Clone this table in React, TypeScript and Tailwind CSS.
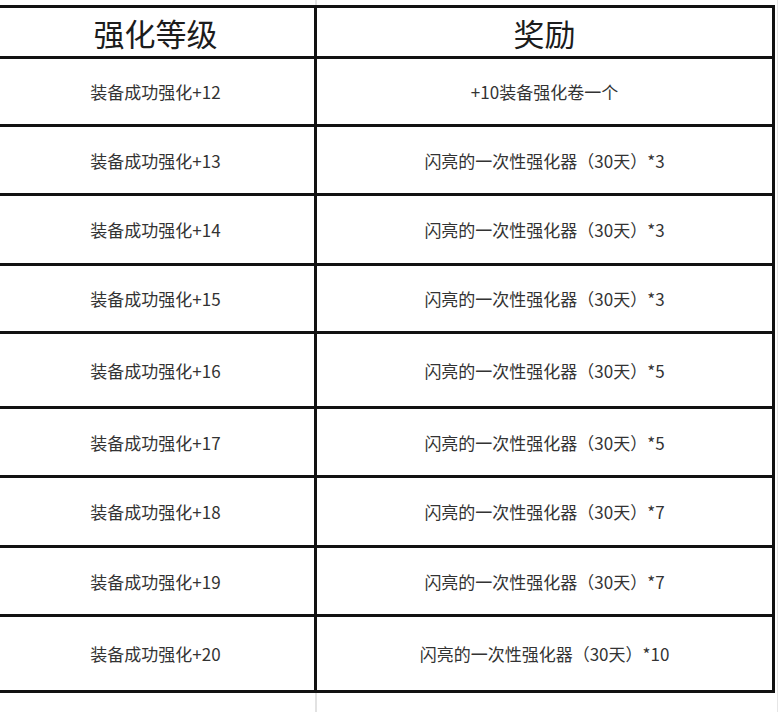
const rows: { level: string; reward: string; h: string }[] = [
  { level: "装备成功强化+12", reward: "+10装备强化卷一个", h: "h-[68px]" },
  { level: "装备成功强化+13", reward: "闪亮的一次性强化器（30天）*3", h: "h-[69px]" },
  { level: "装备成功强化+14", reward: "闪亮的一次性强化器（30天）*3", h: "h-[70px]" },
  { level: "装备成功强化+15", reward: "闪亮的一次性强化器（30天）*3", h: "h-[68px]" },
  { level: "装备成功强化+16", reward: "闪亮的一次性强化器（30天）*5", h: "h-[75px]" },
  { level: "装备成功强化+17", reward: "闪亮的一次性强化器（30天）*5", h: "h-[69px]" },
  { level: "装备成功强化+18", reward: "闪亮的一次性强化器（30天）*7", h: "h-[70px]" },
  { level: "装备成功强化+19", reward: "闪亮的一次性强化器（30天）*7", h: "h-[69px]" },
  { level: "装备成功强化+20", reward: "闪亮的一次性强化器（30天）*10", h: "h-[73px]" },
];

const font = { fontFamily: '"Noto Sans CJK SC", "Noto Sans", sans-serif' };

export default function App() {
  return (
    <div className="h-[712px] w-[780px] overflow-hidden bg-white" style={font}>
      <div className="w-[778px] border-r border-[#e6e6e6]">
        {/* faint ghost of the column divider above the table */}
        <div className="flex h-[5px]">
          <div className="w-[315px]" />
          <div className="w-[2px] bg-[#e2e2e2]" />
        </div>

        <div className="ml-[-6px] w-[781px] border-[3px] border-[#111]">
          <div className="flex h-[51px] border-b-[3px] border-[#111]">
            <div className="flex w-[320px] items-center justify-center border-r-[3px] border-[#111] pt-[1px] text-[31px] leading-none text-[#1c1c1c]">
              强化等级
            </div>
            <div className="flex flex-1 items-center justify-center pt-[1px] text-[31px] leading-none text-[#1c1c1c]">
              奖励
            </div>
          </div>
          {rows.map((r, i) => (
            <div
              key={r.level}
              className={`flex ${r.h} ${i < rows.length - 1 ? "border-b-[3px] border-[#111]" : ""}`}
            >
              <div className="flex w-[320px] items-center justify-center border-r-[3px] border-[#111] text-[17px] leading-none text-[#333]">
                {r.level}
              </div>
              <div className="flex flex-1 items-center justify-center text-[17px] leading-none text-[#333]">
                {r.reward}
              </div>
            </div>
          ))}
        </div>

        {/* faint ghost of the column divider below the table */}
        <div className="flex h-[24px]">
          <div className="w-[315px]" />
          <div className="w-[2px] bg-[#e2e2e2]" />
        </div>
      </div>
    </div>
  );
}
